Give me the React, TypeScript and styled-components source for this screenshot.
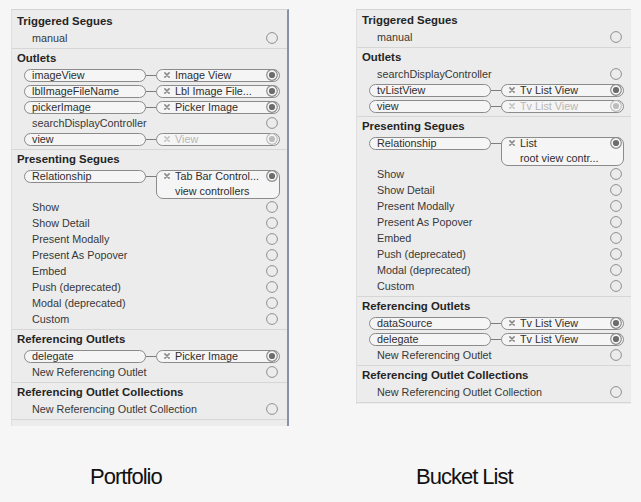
import styled, { createGlobalStyle } from "styled-components";

const GlobalStyle = createGlobalStyle`
  html, body {
    margin: 0;
    padding: 0;
    background: #f6f6f6;
  }
  body {
    font-family: "Liberation Sans", Arial, sans-serif;
  }
`;

type Item =
  | { kind: "plain"; label: string }
  | { kind: "link"; source: string; target: string; dim?: boolean; sub?: string };

type SectionData = { title: string; items: Item[] };

const plain = (label: string): Item => ({ kind: "plain", label });

const segues = [
  "Show",
  "Show Detail",
  "Present Modally",
  "Present As Popover",
  "Embed",
  "Push (deprecated)",
  "Modal (deprecated)",
  "Custom",
].map(plain);

const portfolio: SectionData[] = [
  { title: "Triggered Segues", items: [plain("manual")] },
  {
    title: "Outlets",
    items: [
      { kind: "link", source: "imageView", target: "Image View" },
      { kind: "link", source: "lblImageFileName", target: "Lbl Image File..." },
      { kind: "link", source: "pickerImage", target: "Picker Image" },
      plain("searchDisplayController"),
      { kind: "link", source: "view", target: "View", dim: true },
    ],
  },
  {
    title: "Presenting Segues",
    items: [
      { kind: "link", source: "Relationship", target: "Tab Bar Control...", sub: "view controllers" },
      ...segues,
    ],
  },
  {
    title: "Referencing Outlets",
    items: [
      { kind: "link", source: "delegate", target: "Picker Image" },
      plain("New Referencing Outlet"),
    ],
  },
  { title: "Referencing Outlet Collections", items: [plain("New Referencing Outlet Collection")] },
];

const bucketList: SectionData[] = [
  { title: "Triggered Segues", items: [plain("manual")] },
  {
    title: "Outlets",
    items: [
      plain("searchDisplayController"),
      { kind: "link", source: "tvListView", target: "Tv List View" },
      { kind: "link", source: "view", target: "Tv List View", dim: true },
    ],
  },
  {
    title: "Presenting Segues",
    items: [
      { kind: "link", source: "Relationship", target: "List", sub: "root view contr..." },
      ...segues,
    ],
  },
  {
    title: "Referencing Outlets",
    items: [
      { kind: "link", source: "dataSource", target: "Tv List View" },
      { kind: "link", source: "delegate", target: "Tv List View" },
      plain("New Referencing Outlet"),
    ],
  },
  { title: "Referencing Outlet Collections", items: [plain("New Referencing Outlet Collection")] },
];

const Page = styled.div`
  display: grid;
  grid-template-columns: 278px 275px;
  column-gap: 67px;
  align-items: start;
  padding: 9px 0 0 11px;
  width: 641px;
  height: 502px;
  box-sizing: border-box;
`;

const Panel = styled.div<{ $edge?: boolean; $top: number; $tail: number }>`
  box-sizing: border-box;
  background: #ececec;
  border-top: 1px solid #d3d3d3;
  border-left: 1px solid #dedede;
  border-right: ${(p) => (p.$edge ? "2px solid #8693a6" : "0")};
  padding: ${(p) => p.$top}px 0 ${(p) => p.$tail}px;
`;

const Section = styled.section`
  padding-bottom: 2px;
  border-bottom: 1px solid #d6d6d6;
`;

const Heading = styled.div`
  height: 18px;
  display: flex;
  align-items: center;
  padding-left: 5px;
  font-size: 11.4px;
  font-weight: 700;
  color: #242424;
`;

const Row = styled.div`
  height: 16px;
  display: flex;
  align-items: center;
  padding: 0 9px 0 20px;
  font-size: 10.8px;
  color: #383838;
`;

const Label = styled.span`
  flex: 1;
  white-space: nowrap;
`;

const LinkRow = styled.div<{ $tall?: boolean }>`
  height: ${(p) => (p.$tall ? 31 : 16)}px;
  box-sizing: border-box;
  display: flex;
  align-items: flex-start;
  padding: 1.5px 7px 0 12px;
  font-size: 10.8px;
`;

const Source = styled.div`
  width: 122px;
  height: 13px;
  box-sizing: border-box;
  display: flex;
  align-items: center;
  padding-left: 7px;
  border: 1px solid #8b8b8b;
  border-radius: 7px;
  background: #f5f5f5;
  color: #2e2e2e;
  white-space: nowrap;
`;

const Wire = styled.div`
  width: 10px;
  height: 1px;
  margin-top: 6px;
  background: #7d7d7d;
`;

const Target = styled.div<{ $tall?: boolean }>`
  flex: 1;
  height: ${(p) => (p.$tall ? 29 : 13)}px;
  box-sizing: border-box;
  display: flex;
  flex-direction: column;
  padding: 0 1px 0 7px;
  border: 1px solid #8b8b8b;
  border-radius: 7px;
  background: #f5f5f5;
`;

const TargetLine = styled.div<{ $dim?: boolean }>`
  height: 11px;
  display: flex;
  align-items: center;
  color: ${(p) => (p.$dim ? "#b7b7b7" : "#2e2e2e")};
  white-space: nowrap;
`;

const SubLine = styled.div`
  height: 16px;
  box-sizing: border-box;
  padding: 3px 0 0 11px;
  display: flex;
  align-items: center;
  color: #2e2e2e;
  white-space: nowrap;
`;

const CrossMark = styled.svg`
  flex: none;
  margin-right: 5px;
`;

const SocketMark = styled.svg`
  flex: none;
`;

const Caption = styled.div<{ $indent: number }>`
  margin-top: 26px;
  padding-left: ${(p) => p.$indent}px;
  font-size: 22px;
  line-height: 26px;
  letter-spacing: -1px;
  color: #111;
`;

const Cross = ({ dim }: { dim?: boolean }) => (
  <CrossMark width="6" height="6" viewBox="0 0 6 6">
    <path
      d="M0.9 0.9L5.1 5.1M5.1 0.9L0.9 5.1"
      stroke={dim ? "#c4c4c4" : "#8a8a8a"}
      strokeWidth="1.6"
      strokeLinecap="round"
    />
  </CrossMark>
);

const Socket = ({ filled, dim }: { filled?: boolean; dim?: boolean }) => (
  <SocketMark width="12" height="12" viewBox="0 0 12 12">
    {filled ? (
      <>
        <circle cx="6" cy="6" r="5.3" fill="#f8f8f8" stroke={dim ? "#bdbdbd" : "#8c8c8c"} strokeWidth="1.2" />
        <circle cx="6" cy="6" r="3.1" fill={dim ? "#bcbcbc" : "#6c6c6c"} />
      </>
    ) : (
      <circle cx="6" cy="6" r="5.4" fill="none" stroke="#8f8f8f" strokeWidth="1" />
    )}
  </SocketMark>
);

const Entry = ({ item }: { item: Item }) => {
  if (item.kind === "plain") {
    return (
      <Row>
        <Label>{item.label}</Label>
        <Socket />
      </Row>
    );
  }
  const tall = Boolean(item.sub);
  return (
    <LinkRow $tall={tall}>
      <Source>{item.source}</Source>
      <Wire />
      <Target $tall={tall}>
        <TargetLine $dim={item.dim}>
          <Cross dim={item.dim} />
          <Label>{item.target}</Label>
          <Socket filled dim={item.dim} />
        </TargetLine>
        {item.sub && <SubLine>{item.sub}</SubLine>}
      </Target>
    </LinkRow>
  );
};

const Inspector = ({ sections, edge, top, tail }: { sections: SectionData[]; edge?: boolean; top: number; tail: number }) => (
  <Panel $edge={edge} $top={top} $tail={tail}>
    {sections.map((s) => (
      <Section key={s.title}>
        <Heading>{s.title}</Heading>
        {s.items.map((item, i) => (
          <Entry key={i} item={item} />
        ))}
      </Section>
    ))}
  </Panel>
);

export default function App() {
  return (
    <>
      <GlobalStyle />
      <Page>
        <Inspector sections={portfolio} edge top={2} tail={6} />
        <Inspector sections={bucketList} top={1} tail={1} />
        <Caption $indent={79}>Portfolio</Caption>
        <Caption $indent={60}>Bucket List</Caption>
      </Page>
    </>
  );
}
